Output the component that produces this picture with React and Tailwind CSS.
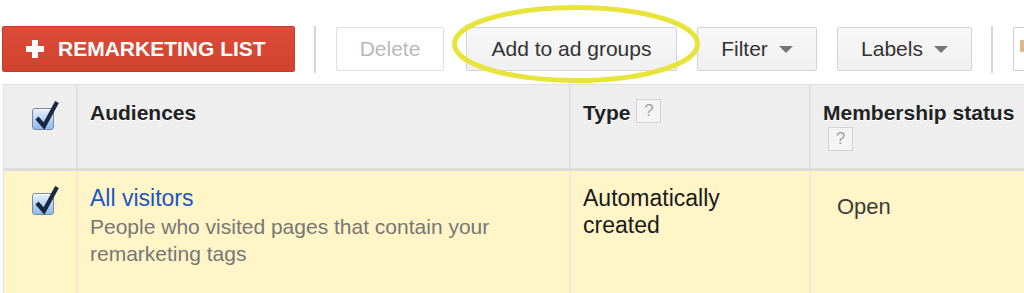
import React from 'react'

function Check() {
  return (
    <div className="relative w-[22px] h-[22px] rounded-[3px] border border-[#7b889f] bg-linear-to-b from-[#e6f1fd] to-[#8dbaee] shadow-[inset_0_1px_0_#fff]">
      <svg className="absolute -top-[9px] left-0 overflow-visible" width="26" height="30" viewBox="0 0 26 30">
        <path d="M4 18 L11 26 L24 2" fill="none" stroke="#1a2844" strokeWidth="4.2" strokeLinejoin="miter" strokeLinecap="butt" />
      </svg>
    </div>
  )
}

function Arrow() {
  return <span className="inline-block w-0 h-0 border-x-[7px] border-t-[7px] border-x-transparent border-t-[#777]" />
}

function GreyBtn({ w, children, ml }) {
  return (
    <div className={`${w} ${ml} shrink-0 h-[44px] flex items-center justify-center gap-[11px] rounded-[2px] border border-[#d4d4d4] bg-linear-to-b from-[#f8f8f8] to-[#f0f0f0] text-[21px] text-[#333]`}>
      {children}
    </div>
  )
}

function Help({ cls }) {
  return (
    <span className={`inline-flex items-center justify-center w-[25px] h-[24px] border border-[#d2d2d2] bg-[#f4f4f4] text-[17px] font-normal text-[#a0a0a0] ${cls}`}>?</span>
  )
}

export default function App() {
  return (
    <div className="relative w-[1024px] h-[293px] overflow-hidden bg-white font-['Liberation_Sans',Arial,sans-serif]">
      {/* toolbar */}
      <div className="flex items-center h-[84px] pt-[14px] pl-[2px]">
        <div className="w-[293px] shrink-0 h-[46px] flex items-center pl-[23px] rounded-[2px] border border-[#c63b2a] bg-linear-to-b from-[#dd4b39] to-[#d0432f] text-white font-bold text-[21px]">
          <span className="relative w-[18px] h-[18px] mr-[14px]">
            <span className="absolute left-[6px] top-0 w-[6px] h-[18px] bg-white" />
            <span className="absolute left-0 top-[6px] w-[18px] h-[6px] bg-white" />
          </span>
          REMARKETING LIST
        </div>
        <div className="ml-[19px] shrink-0 w-[2px] h-[47px] bg-[#d6d6d6]" />
        <div className="ml-[20px] shrink-0 w-[108px] h-[44px] flex items-center justify-center rounded-[2px] border border-[#e0e0e0] bg-white text-[21px] text-[#b9b9b9]">
          Delete
        </div>
        <GreyBtn w="w-[211px]" ml="ml-[22px]">Add to ad groups</GreyBtn>
        <GreyBtn w="w-[120px]" ml="ml-[20px]">Filter <Arrow /></GreyBtn>
        <GreyBtn w="w-[135px]" ml="ml-[20px]">Labels <Arrow /></GreyBtn>
        <div className="ml-[19px] shrink-0 w-[2px] h-[47px] bg-[#d6d6d6]" />
        <div className="ml-[20px] w-[40px] h-[44px] shrink-0 rounded-[2px] border border-[#cfcfcf] bg-white pl-[6px] pt-[12px]">
          <div className="w-[4px] h-[12px] rounded-[1px] bg-[#d9b98a]" />
        </div>
      </div>

      {/* table */}
      <div className="ml-[3px] border-t border-l border-[#e0e0e0]">
        <div className="flex h-[86px] bg-[#eeeeee] border-b-[3px] border-[#dddddd] text-[21px] font-bold text-[#222] leading-[24px] [text-shadow:0_1px_0_#fff]">
          <div className="w-[74px] shrink-0 border-r-2 border-[#e2e2e2] pl-[28px] pt-[23px]">
            <Check />
          </div>
          <div className="w-[493px] shrink-0 border-r-2 border-[#e2e2e2] pl-[12px] pt-[16px]">Audiences</div>
          <div className="w-[240px] shrink-0 border-r-2 border-[#e2e2e2] pl-[12px] pt-[16px] flex items-start">
            <span>Type</span>
            <Help cls="ml-[6px] -mt-[2px]" />
          </div>
          <div className="flex-1 pl-[12px] pt-[16px] whitespace-nowrap">
            <div>Membership status</div>
            <Help cls="ml-[5px]" />
          </div>
        </div>
        <div className="flex h-[140px] bg-[#fff5c6]">
          <div className="w-[74px] shrink-0 border-r-2 border-[#f3ead0] pl-[28px] pt-[22px]">
            <Check />
          </div>
          <div className="w-[493px] shrink-0 border-r-2 border-[#f3ead0] pl-[12px] pr-[40px] pt-[13px]">
            <div className="text-[23px] leading-[28px] text-[#1b56c9]">All visitors</div>
            <div className="mt-[1px] text-[21px] leading-[27px] text-[#777]">
              People who visited pages that contain your remarketing tags
            </div>
          </div>
          <div className="w-[240px] shrink-0 border-r-2 border-[#f3ead0] pl-[12px] pr-[30px] pt-[14px] text-[23px] leading-[27px] text-[#1a1a1a]">
            Automatically created
          </div>
          <div className="flex-1 pl-[26px] pt-[22px] text-[22px] leading-[27px] text-[#3c3c3c]">Open</div>
        </div>
      </div>

      {/* highlight ring */}
      <svg className="absolute left-0 top-0 pointer-events-none" width="1024" height="293">
        <ellipse cx="576" cy="44" rx="121.5" ry="36.5" fill="none" stroke="#e8e43c" strokeWidth="5" />
      </svg>
    </div>
  )
}
